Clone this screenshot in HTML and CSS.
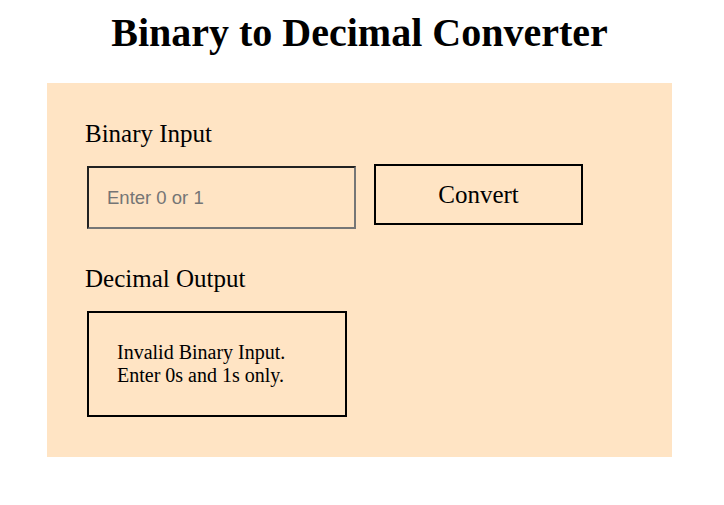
FILE: index.html
```html
<!DOCTYPE html>
<html lang="en">
<head>
<meta charset="utf-8">
<title>Binary to Decimal Converter</title>
<link rel="stylesheet" href="styles.css">
</head>
<body>
<div class="page">
  <h1 class="title">Binary to Decimal Converter</h1>
  <div class="panel">
    <div class="label">Binary Input</div>
    <div class="row">
      <input class="bin-input" type="text" placeholder="Enter 0 or 1">
      <button class="convert" type="button">Convert</button>
    </div>
    <div class="label label-out">Decimal Output</div>
    <div class="output">Invalid Binary Input.<br>Enter 0s and 1s only.</div>
  </div>
</div>
</body>
</html>
```
FILE: styles.css
```css
html, body {
  margin: 0;
  padding: 0;
  background: #ffffff;
}
body {
  font-family: "Liberation Serif", "Times New Roman", serif;
  color: #000;
}
.page {
  width: 625px;
  margin-left: 47px;
}
.title {
  margin: 10px 0 27px;
  font-size: 40px;
  line-height: 46px;
  font-weight: bold;
  text-align: center;
}
.panel {
  box-sizing: border-box;
  height: 374px;
  background: #ffe4c4;
  padding: 36px 38px 0;
}
.label {
  font-size: 25px;
  line-height: 29px;
}
.row {
  display: flex;
  align-items: flex-start;
  margin-top: 16px;
  margin-left: 2px;
}
.bin-input {
  box-sizing: border-box;
  width: 269px;
  height: 63px;
  margin: 2px 0 0;
  padding: 0 0 0 18px;
  border: 2px inset #767676;
  background: transparent;
  font-family: "Liberation Sans", Arial, sans-serif;
  font-size: 18.5px;
  color: #000;
  outline: none;
}
.bin-input::placeholder {
  color: #757575;
}
.convert {
  box-sizing: border-box;
  width: 209px;
  height: 61px;
  margin-left: 18px;
  padding: 0;
  border: 2px solid #000;
  background: transparent;
  font-family: "Liberation Serif", "Times New Roman", serif;
  font-size: 25px;
  color: #000;
}
.label-out {
  margin-top: 35px;
}
.output {
  box-sizing: border-box;
  width: 260px;
  height: 106px;
  margin-top: 18px;
  margin-left: 2px;
  padding: 28px;
  border: 2px solid #000;
  font-size: 20px;
  line-height: 23px;
}
```
